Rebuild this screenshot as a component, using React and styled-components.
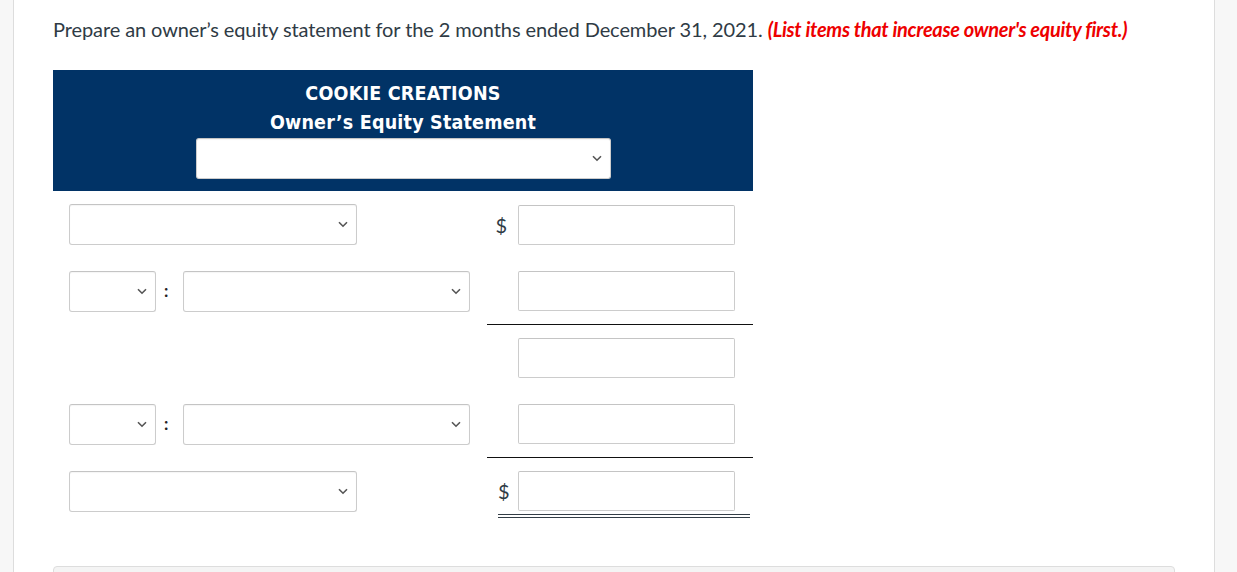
import React from 'react';
import styled, { createGlobalStyle } from 'styled-components';

const GlobalStyle = createGlobalStyle`
  html, body {
    margin: 0;
    padding: 0;
    background: #ffffff;
    font-family: Lato, "Liberation Sans", sans-serif;
    color: #333333;
  }
  * { box-sizing: border-box; }
`;

const Shell = styled.div`
  display: flex;
  height: 572px;
  overflow: hidden;
`;

const Gutter = styled.div`
  width: ${p => p.$width}px;
  flex: none;
  background: #f7f7f7;
  border-${p => p.$side}: 1px solid #dddddd;
`;

const Panel = styled.div`
  flex: 1;
  background: #ffffff;
  padding: 15px 0 0 39px;
  display: flex;
  flex-direction: column;
`;

const Prompt = styled.p`
  margin: 0;
  font-size: 20px;
  line-height: 28px;
  letter-spacing: -0.1px;
  color: #2f3b45;
  white-space: nowrap;
`;

const Hint = styled.em`
  color: #ee0000;
  font-weight: 700;
  letter-spacing: -0.3px;
`;

const Statement = styled.div`
  width: 700px;
  margin-top: 27px;
`;

const Header = styled.div`
  background: #013366;
  color: #ffffff;
  height: 121px;
  padding-top: 9px;
  display: flex;
  flex-direction: column;
  align-items: center;
`;

const Title = styled.div`
  font-family: "DejaVu Sans Condensed", "DejaVu Sans", sans-serif;
  font-weight: 700;
  font-size: 19.5px;
  line-height: 29px;
  letter-spacing: 0.2px;
`;

const PeriodSlot = styled.div`
  margin-top: 1px;
`;

const Row = styled.div`
  display: flex;
`;

const LeftCell = styled.div`
  width: 434px;
  padding: 13px 0 13px 16px;
  display: flex;
  align-items: center;
`;

const RightCell = styled.div`
  width: 266px;
  padding: 13px 18px 13px 0;
  display: flex;
  align-items: center;
  border-bottom: ${p => (p.$rule ? '1px solid #111111' : '0')};
`;

const TotalCell = styled.div`
  width: 266px;
  padding: 13px 3px 0 11px;
`;

const TotalWrap = styled.div`
  display: flex;
  align-items: center;
  padding: 0 15px 3px 0;
  border-bottom: 4px double #333d46;
`;

const Dollar = styled.span`
  width: ${p => (p.$compact ? 20 : 31)}px;
  flex: none;
  text-align: right;
  padding-right: 11px;
  font-size: 20px;
  color: #2f3b45;
  visibility: ${p => (p.$hidden ? 'hidden' : 'visible')};
`;

const Select = styled.div`
  width: ${p => p.$w}px;
  height: 41px;
  flex: none;
  background: #ffffff;
  border: 1px solid #cccccc;
  border-top-color: #c4c4c4;
  border-radius: 3px;
  box-shadow: inset 0 1px 1px rgba(0, 0, 0, 0.04);
  display: flex;
  align-items: center;
  justify-content: flex-end;
  padding-right: 8px;
`;

const Colon = styled.span`
  width: 27px;
  flex: none;
  padding: 0 0 3px 8px;
  font-size: 17px;
  font-weight: 700;
  color: #222222;
`;

const Amount = styled.div`
  width: 217px;
  height: 40px;
  flex: none;
  border: 1px solid #cccccc;
  border-top-color: #c4c4c4;
  border-radius: 2px;
  background: #ffffff;
`;

const Footer = styled.div`
  margin-top: 41px;
  width: 1122px;
  height: 20px;
  flex: none;
  background: #f4f4f4;
  border: 1px solid #dddddd;
  border-radius: 4px 4px 0 0;
`;

const Chevron = () => (
  <svg width="10" height="7" viewBox="0 0 10 7">
    <path d="M1 1.2 L5 5.2 L9 1.2" fill="none" stroke="#555555" strokeWidth="1.6" />
  </svg>
);

const Dropdown = ({ w }) => (
  <Select $w={w}>
    <Chevron />
  </Select>
);

const PairCell = () => (
  <LeftCell>
    <Dropdown w={87} />
    <Colon>:</Colon>
    <Dropdown w={287} />
  </LeftCell>
);

export default function App() {
  return (
    <>
      <GlobalStyle />
      <Shell>
        <Gutter $width={14} $side="right" />
        <Panel>
          <Prompt>
            Prepare an owner’s equity statement for the 2 months ended December 31, 2021.{' '}
            <Hint>(List items that increase owner's equity first.)</Hint>
          </Prompt>
          <Statement>
            <Header>
              <Title>COOKIE CREATIONS</Title>
              <Title>Owner’s Equity Statement</Title>
              <PeriodSlot>
                <Dropdown w={415} />
              </PeriodSlot>
            </Header>
            <Row>
              <LeftCell>
                <Dropdown w={288} />
              </LeftCell>
              <RightCell>
                <Dollar>$</Dollar>
                <Amount />
              </RightCell>
            </Row>
            <Row>
              <PairCell />
              <RightCell $rule>
                <Dollar $hidden>$</Dollar>
                <Amount />
              </RightCell>
            </Row>
            <Row>
              <LeftCell />
              <RightCell>
                <Dollar $hidden>$</Dollar>
                <Amount />
              </RightCell>
            </Row>
            <Row>
              <PairCell />
              <RightCell $rule>
                <Dollar $hidden>$</Dollar>
                <Amount />
              </RightCell>
            </Row>
            <Row>
              <LeftCell>
                <Dropdown w={288} />
              </LeftCell>
              <TotalCell>
                <TotalWrap>
                  <Dollar $compact>$</Dollar>
                  <Amount />
                </TotalWrap>
              </TotalCell>
            </Row>
          </Statement>
          <Footer />
        </Panel>
        <Gutter $width={23} $side="left" />
      </Shell>
    </>
  );
}
